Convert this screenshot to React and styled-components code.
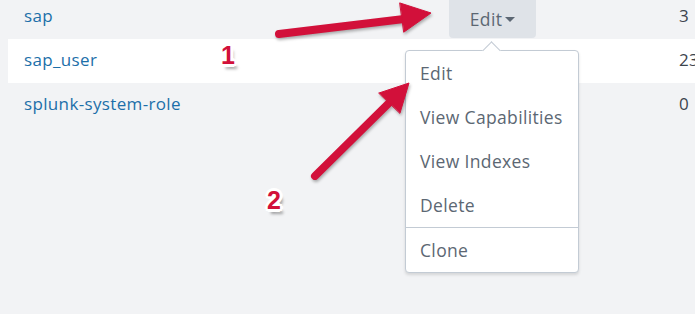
import React from 'react'
import styled, { createGlobalStyle } from 'styled-components'

const GlobalStyle = createGlobalStyle`
    html, body {
        margin: 0;
        padding: 0;
        background: #f2f3f5;
        font-family: "Open Sans", Lato, "Liberation Sans", sans-serif;
    }
`

const Page = styled.div`
    position: relative;
    width: 695px;
    height: 314px;
    overflow: hidden;
    background: #f2f3f5;
`

const Table = styled.div`
    margin: -5px 0 0 8px;
`

const Row = styled.div`
    display: grid;
    grid-template-columns: 441px 230px 1fr;
    align-items: center;
    height: 44px;
    background: ${p => (p.$striped ? '#ffffff' : 'transparent')};
`

const Name = styled.a`
    padding-left: 16px;
    margin-top: -3px;
    font-size: 17px;
    letter-spacing: 0.35px;
    color: #1c6fa9;
    text-decoration: none;
`

const ActionCell = styled.div`
    align-self: stretch;
    display: flex;
    align-items: stretch;
    padding-bottom: 1px;
`

const EditButton = styled.button`
    display: flex;
    align-items: center;
    justify-content: center;
    gap: 3px;
    width: 87px;
    padding: 4px 0 0;
    border: none;
    border-radius: 0 0 4px 4px;
    background: #dfe3e8;
    color: #5c6773;
    font-family: inherit;
    font-size: 17.5px;
    letter-spacing: 0.35px;
`

const Caret = styled.span`
    width: 0;
    height: 0;
    border-left: 5px solid transparent;
    border-right: 5px solid transparent;
    border-top: 5px solid #5c6773;
    margin-top: 2px;
`

const Count = styled.span`
    margin-top: -3px;
    font-size: 17px;
    letter-spacing: 0.35px;
    color: #3c444d;
`

const Menu = styled.ul`
    position: absolute;
    left: 405px;
    top: 50px;
    width: 172px;
    margin: 0;
    padding: 0;
    list-style: none;
    background: #fff;
    border: 1px solid #c3cbd4;
    border-radius: 4px;
    box-shadow: 0 2px 3px rgba(0, 0, 0, 0.12);

    &::before {
        content: '';
        position: absolute;
        left: 79px;
        top: -7px;
        width: 12px;
        height: 12px;
        background: #fff;
        border-top: 1px solid #c3cbd4;
        border-left: 1px solid #c3cbd4;
        transform: rotate(45deg);
    }
`

const MenuItem = styled.li`
    position: relative;
    height: 44px;
    display: flex;
    align-items: center;
    padding-left: 14px;
    font-size: 17.5px;
    letter-spacing: 0.35px;
    color: #5c6773;
    border-top: ${p => (p.$divider ? '1px solid #c3cbd4' : 'none')};
`

const Overlay = styled.svg`
    position: absolute;
    left: 0;
    top: 0;
    pointer-events: none;
    filter: drop-shadow(1px 2px 1.5px rgba(0, 0, 0, 0.3));
`

const Badge = styled.span`
    position: absolute;
    left: ${p => p.$x}px;
    top: ${p => p.$y}px;
    font-family: "Liberation Sans", Arial, sans-serif;
    font-weight: bold;
    font-size: 25px;
    line-height: 1;
    color: #d2103a;
    text-shadow:
        3px 0 0 #fff, -3px 0 0 #fff, 0 3px 0 #fff, 0 -3px 0 #fff,
        2px 2px 0 #fff, -2px -2px 0 #fff, 2px -2px 0 #fff, -2px 2px 0 #fff,
        3px 5px 3px rgba(0, 0, 0, 0.35);
`

const roles = [
    { name: 'sap', count: '3' },
    { name: 'sap_user', count: '23' },
    { name: 'splunk-system-role', count: '0' },
]

export default function App () {
    return (
        <Page>
            <GlobalStyle />
            <Table>
                {roles.map((r, i) => (
                    <Row key={r.name} $striped={i % 2 === 1}>
                        <Name href="#">{r.name}</Name>
                        <ActionCell>
                            {i === 0 && (
                                <EditButton>Edit<Caret /></EditButton>
                            )}
                        </ActionCell>
                        <Count>{r.count}</Count>
                    </Row>
                ))}
            </Table>

            <Menu>
                <MenuItem>Edit</MenuItem>
                <MenuItem>View Capabilities</MenuItem>
                <MenuItem>View Indexes</MenuItem>
                <MenuItem>Delete</MenuItem>
                <MenuItem $divider>Clone</MenuItem>
            </Menu>

            <Overlay width="695" height="314" viewBox="0 0 695 314">
                <g fill="#d2103a" stroke="#d2103a" strokeLinecap="round" strokeLinejoin="round">
                    <line x1="279" y1="34" x2="404" y2="19" strokeWidth="8" />
                    <polygon points="400,3 431,13 404,32" strokeWidth="1" />
                    <line x1="315" y1="176" x2="392" y2="100" strokeWidth="8" />
                    <polygon points="379,93 409,83 400,113" strokeWidth="1" />
                </g>
            </Overlay>

            <Badge $x={221} $y={43}>1</Badge>
            <Badge $x={267} $y={188}>2</Badge>
        </Page>
    )
}
